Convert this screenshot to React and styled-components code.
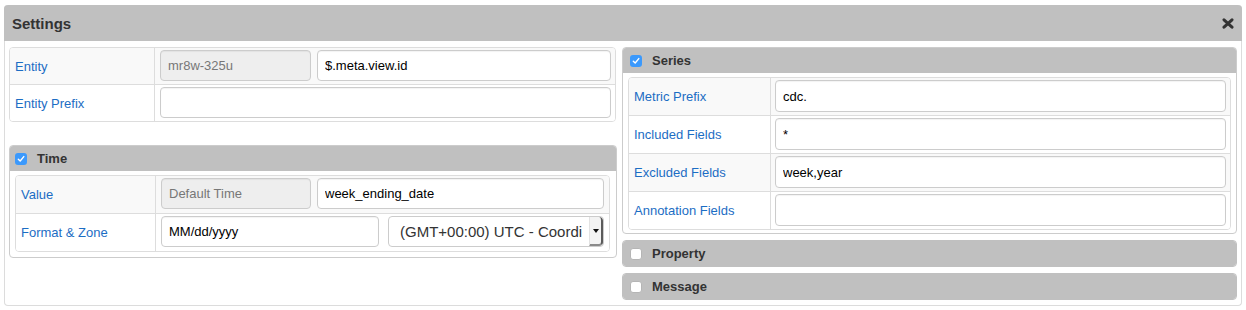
import React from "react";
import styled, { createGlobalStyle } from "styled-components";

const GlobalStyle = createGlobalStyle`
  html, body { margin: 0; padding: 0; background: #ffffff; }
  body { font-family: "Liberation Sans", Arial, sans-serif; color: #333; }
  * { box-sizing: border-box; }
`;

const Window = styled.div`
  margin: 5px 0 0 4px;
  width: 1238px;
  height: 301px;
  border: 1px solid #dcdcdc;
  border-top: none;
  border-radius: 4px;
  display: flex;
  flex-direction: column;
  background: #fff;
`;

const TitleBar = styled.div`
  height: 36px;
  background: #c0c0c0;
  border-radius: 4px 4px 0 0;
  margin: 0 -1px;
  display: flex;
  align-items: center;
  justify-content: space-between;
  padding: 0 8px 0 8px;
`;

const Title = styled.div`
  font-size: 15px;
  font-weight: bold;
  color: #333;
`;

const CloseButton = styled.div`
  width: 12px;
  height: 12px;
  display: flex;
  align-items: center;
  justify-content: center;
  cursor: pointer;
`;

const Body = styled.div`
  flex: 1;
  display: grid;
  grid-template-columns: 608px 615px;
  column-gap: 5px;
  padding: 6px 4px 5px 4px;
  align-items: start;
`;

const Column = styled.div`
  display: flex;
  flex-direction: column;
  gap: ${(p) => p.$gap || 0}px;
`;

const FieldTable = styled.div`
  border: 1px solid #dddddd;
  border-radius: 4px;
  overflow: hidden;
  width: ${(p) => p.$width || "100%"};
  margin-top: ${(p) => p.$mt || 0}px;
`;

const Row = styled.div`
  display: grid;
  grid-template-columns: ${(p) => p.$label}px 1fr;
  background: ${(p) => (p.$striped ? "#f9f9f9" : "#ffffff")};
  & + & { border-top: 1px solid #dddddd; }
`;

const LabelCell = styled.div`
  border-right: 1px solid #dddddd;
  display: flex;
  align-items: center;
  padding-left: 5px;
  font-size: 13px;
  color: #1c6dc4;
`;

const InputCell = styled.div`
  padding: 2px ${(p) => p.$pr || 4}px ${(p) => p.$pb || 3}px ${(p) => p.$pl || 5}px;
  display: grid;
  grid-template-columns: ${(p) => p.$cols || "1fr"};
  column-gap: ${(p) => p.$gap || 6}px;
`;

const TextInput = styled.input`
  display: block;
  width: 100%;
  height: ${(p) => p.$h || 31}px;
  border: 1px solid #cccccc;
  border-radius: 4px;
  padding: 0 7px;
  font-family: "Liberation Sans", Arial, sans-serif;
  font-size: 13px;
  color: ${(p) => (p.$disabled ? "#777777" : "#000000")};
  background: ${(p) => (p.$disabled ? "#eeeeee" : "#ffffff")};
  box-shadow: inset 0 1px 1px rgba(0, 0, 0, 0.05);
  outline: none;
`;

const SelectBox = styled.div`
  height: 31px;
  border: 1px solid #cccccc;
  border-radius: 4px;
  display: flex;
  align-items: stretch;
  background: #fff;
  overflow: hidden;
`;

const SelectText = styled.div`
  flex: 1;
  overflow: hidden;
  white-space: nowrap;
  font-size: 15px;
  color: #333;
  display: flex;
  align-items: center;
  padding-left: 11px;
  margin-right: 7px;
`;

const SelectArrow = styled.div`
  width: 14px;
  background: #f3f3f3;
  border-left: 1px solid #e2e2e2;
  border-right: 2px solid #5a5a5a;
  border-bottom: 2px solid #8a8a8a;
  border-radius: 0 4px 4px 0;
  display: flex;
  align-items: center;
  justify-content: center;
  &::after {
    content: "";
    border-left: 3px solid transparent;
    border-right: 3px solid transparent;
    border-top: 4px solid #111;
  }
`;

const Panel = styled.div`
  border: 1px solid #cccccc;
  border-radius: 4px;
  margin-top: ${(p) => p.$mt || 0}px;
  overflow: hidden;
  ${(p) => (p.$collapsed ? "border-color: #c0c0c0;" : "")}
`;

const PanelHeader = styled.div`
  height: ${(p) => p.$h || 25}px;
  background: #c0c0c0;
  display: flex;
  align-items: center;
  padding-left: ${(p) => p.$pl || 6}px;
  gap: 10px;
  font-size: 13px;
  font-weight: bold;
  color: #333;
`;

const PanelBody = styled.div`
  padding: 4px ${(p) => p.$pr || 5}px ${(p) => p.$pb || 4}px 5px;
`;

const Check = styled.span`
  width: 12px;
  height: 12px;
  border-radius: 3px;
  flex: none;
  display: inline-flex;
  align-items: center;
  justify-content: center;
  background: ${(p) => (p.$checked ? "#3b99fc" : "#ffffff")};
  border: ${(p) => (p.$checked ? "none" : "1px solid #b5b5b5")};
`;

const CheckMark = () => (
  <svg width="8" height="8" viewBox="0 0 8 8">
    <path d="M1.3 4.2 L3.2 6 L6.8 1.6" fill="none" stroke="#fff" strokeWidth="1.4" strokeLinecap="round" strokeLinejoin="round" />
  </svg>
);

const Checkbox = ({ checked }) => (
  <Check $checked={checked}>{checked && <CheckMark />}</Check>
);

const CloseIcon = () => (
  <svg width="12" height="11" viewBox="0 0 12 11">
    <path d="M2 1.8 L10 9.2 M10 1.8 L2 9.2" stroke="#333" strokeWidth="3" strokeLinecap="round" />
  </svg>
);

const seriesRows = [
  { label: "Metric Prefix", value: "cdc." },
  { label: "Included Fields", value: "*" },
  { label: "Excluded Fields", value: "week,year" },
  { label: "Annotation Fields", value: "" },
];

export default function App() {
  return (
    <>
      <GlobalStyle />
      <Window>
        <TitleBar>
          <Title>Settings</Title>
          <CloseButton>
            <CloseIcon />
          </CloseButton>
        </TitleBar>
        <Body>
          <Column>
            <FieldTable $width="607px">
              <Row $label={145} $striped>
                <LabelCell>Entity</LabelCell>
                <InputCell $cols="151px 1fr">
                  <TextInput $disabled readOnly value="mr8w-325u" />
                  <TextInput readOnly value="$.meta.view.id" />
                </InputCell>
              </Row>
              <Row $label={145}>
                <LabelCell>Entity Prefix</LabelCell>
                <InputCell>
                  <TextInput readOnly value="" />
                </InputCell>
              </Row>
            </FieldTable>

            <Panel $mt={23}>
              <PanelHeader $pl={5}>
                <Checkbox checked />
                <span>Time</span>
              </PanelHeader>
              <PanelBody $pr={6} $pb={5}>
                <FieldTable>
                  <Row $label={140} $striped>
                    <LabelCell>Value</LabelCell>
                    <InputCell $cols="150px 1fr" $pr={5} $pb={4}>
                      <TextInput $disabled readOnly value="Default Time" />
                      <TextInput readOnly value="week_ending_date" />
                    </InputCell>
                  </Row>
                  <Row $label={140}>
                    <LabelCell>Format &amp; Zone</LabelCell>
                    <InputCell $cols="218px 1fr" $gap={9} $pr={5} $pb={4}>
                      <TextInput readOnly value="MM/dd/yyyy" />
                      <SelectBox>
                        <SelectText>(GMT+00:00) UTC - Coordinated Universal Time</SelectText>
                        <SelectArrow />
                      </SelectBox>
                    </InputCell>
                  </Row>
                </FieldTable>
              </PanelBody>
            </Panel>
          </Column>

          <Column $gap={6}>
            <Panel>
              <PanelHeader $pl={7}>
                <Checkbox checked />
                <span>Series</span>
              </PanelHeader>
              <PanelBody $pb={3}>
                <FieldTable>
                  {seriesRows.map((r, i) => (
                    <Row key={r.label} $label={142} $striped={i % 2 === 0}>
                      <LabelCell>{r.label}</LabelCell>
                      <InputCell $pl={4} $pb={3}>
                        <TextInput $h={32} readOnly value={r.value} />
                      </InputCell>
                    </Row>
                  ))}
                </FieldTable>
              </PanelBody>
            </Panel>
            <Panel $collapsed>
              <PanelHeader $h={25} $pl={7}>
                <Checkbox />
                <span>Property</span>
              </PanelHeader>
            </Panel>
            <Panel $collapsed>
              <PanelHeader $h={25} $pl={7}>
                <Checkbox />
                <span>Message</span>
              </PanelHeader>
            </Panel>
          </Column>
        </Body>
      </Window>
    </>
  );
}
